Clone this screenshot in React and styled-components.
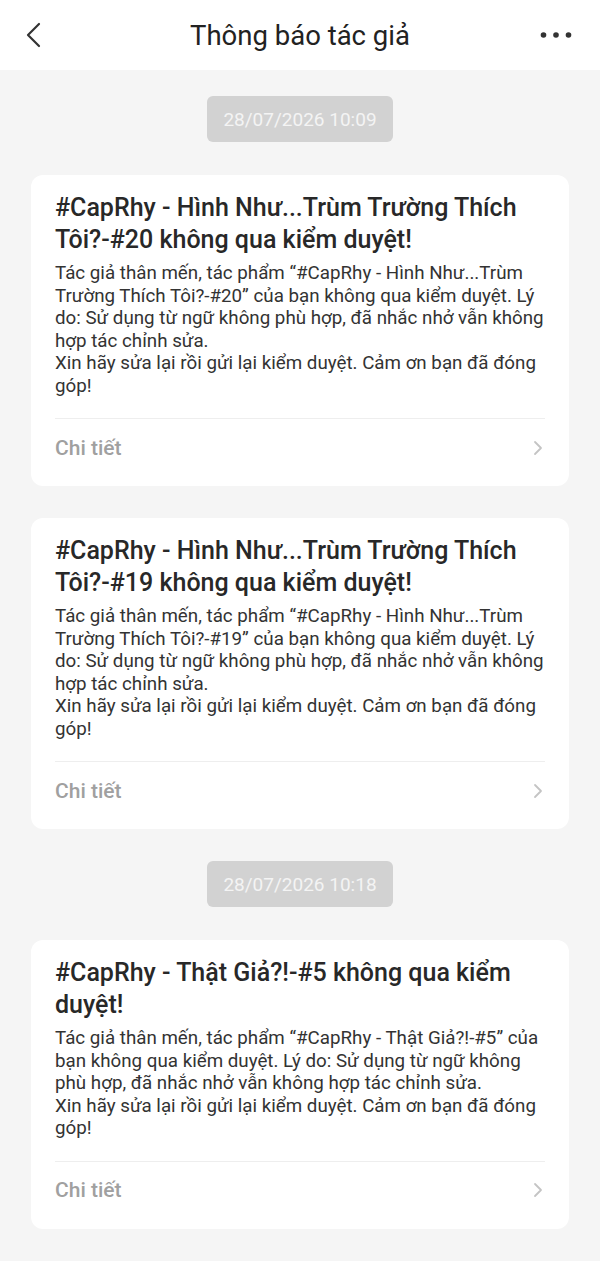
import React from "react";
import styled, { createGlobalStyle } from "styled-components";

const Global = createGlobalStyle`
  html, body { margin: 0; padding: 0; background: #f5f5f5; }
  body { font-family: Roboto, "Noto Sans", sans-serif; -webkit-font-smoothing: antialiased; }
  * { box-sizing: border-box; }
`;

const Page = styled.div`
  width: 600px;
  min-height: 1261px;
  background: #f5f5f5;
`;

const Header = styled.header`
  height: 70px;
  background: #fff;
  display: grid;
  grid-template-columns: 100px 1fr 100px;
  align-items: center;
`;

const IconBtn = styled.div`
  display: flex;
  align-items: center;
  justify-content: ${(p) => p.$align || "center"};
  height: 100%;
  padding: 0 ${(p) => p.$pad || 0}px;
`;

const Title = styled.h1`
  margin: 0;
  text-align: center;
  font-size: 27.5px;
  font-weight: 400;
  color: #222;
  white-space: nowrap;
`;

const Feed = styled.main`
  display: flex;
  flex-direction: column;
  align-items: center;
  padding: 26px 31px 32px;
  gap: 32px;
`;

const DatePill = styled.div`
  width: 186px;
  height: 46px;
  margin-bottom: 1px;
  border-radius: 6px;
  background: #d2d2d2;
  color: #f4f4f4;
  font-size: 19px;
  display: flex;
  align-items: center;
  justify-content: center;
`;

const Card = styled.article`
  width: 538px;
  background: #fff;
  border-radius: 12px;
  padding: 17px 24px 10px;
`;

const CardTitle = styled.h2`
  margin: 0;
  font-size: 25px;
  line-height: 32px;
  font-weight: 500;
  color: #282828;
`;

const Body = styled.p`
  margin: 6px 0 0;
  font-size: 18.75px;
  line-height: 22.5px;
  color: #333;
`;

const Footer = styled.div`
  margin-top: 21px;
  border-top: 1px solid #eeeeee;
  height: 58px;
  display: flex;
  align-items: center;
  justify-content: space-between;
`;

const Detail = styled.span`
  font-size: 21px;
  font-weight: 500;
  color: #a0a0a0;
`;

const Chevron = () => (
  <svg width="10" height="16" viewBox="0 0 10 16" style={{ marginRight: 2 }}>
    <polyline points="2,2 8,8 2,14" fill="none" stroke="#c4c4c4" strokeWidth="1.8" strokeLinecap="round" strokeLinejoin="round" />
  </svg>
);

const Back = () => (
  <svg width="20" height="28" viewBox="0 0 20 28">
    <polyline points="15,3 4,14 15,25" fill="none" stroke="#333" strokeWidth="2.2" strokeLinecap="round" strokeLinejoin="round" />
  </svg>
);

const More = () => (
  <svg width="32" height="8" viewBox="0 0 32 8">
    <circle cx="3.5" cy="4" r="2.8" fill="#333" />
    <circle cx="16" cy="4" r="2.8" fill="#333" />
    <circle cx="28.5" cy="4" r="2.8" fill="#333" />
  </svg>
);

const BODY2 = "Xin hãy sửa lại rồi gửi lại kiểm duyệt. Cảm ơn bạn đã đóng góp!";

const items = [
  { date: "28/07/2026 10:09" },
  {
    title: "#CapRhy - Hình Như...Trùm Trường Thích Tôi?-#20 không qua kiểm duyệt!",
    body: "Tác giả thân mến, tác phẩm “#CapRhy - Hình Như...Trùm Trường Thích Tôi?-#20” của bạn không qua kiểm duyệt. Lý do: Sử dụng từ ngữ không phù hợp, đã nhắc nhở vẫn không hợp tác chỉnh sửa.",
  },
  {
    title: "#CapRhy - Hình Như...Trùm Trường Thích Tôi?-#19 không qua kiểm duyệt!",
    body: "Tác giả thân mến, tác phẩm “#CapRhy - Hình Như...Trùm Trường Thích Tôi?-#19” của bạn không qua kiểm duyệt. Lý do: Sử dụng từ ngữ không phù hợp, đã nhắc nhở vẫn không hợp tác chỉnh sửa.",
  },
  { date: "28/07/2026 10:18" },
  {
    title: "#CapRhy - Thật Giả?!-#5 không qua kiểm duyệt!",
    body: "Tác giả thân mến, tác phẩm “#CapRhy - Thật Giả?!-#5” của bạn không qua kiểm duyệt. Lý do: Sử dụng từ ngữ không phù hợp, đã nhắc nhở vẫn không hợp tác chỉnh sửa.",
  },
];

export default function App() {
  return (
    <Page>
      <Global />
      <Header>
        <IconBtn $align="flex-start" $pad={24}><Back /></IconBtn>
        <Title>Thông báo tác giả</Title>
        <IconBtn $align="flex-end" $pad={28}><More /></IconBtn>
      </Header>
      <Feed>
        {items.map((it, i) =>
          it.date ? (
            <DatePill key={i}>{it.date}</DatePill>
          ) : (
            <Card key={i}>
              <CardTitle>{it.title}</CardTitle>
              <Body>
                {it.body}
                <br />
                {BODY2}
              </Body>
              <Footer>
                <Detail>Chi tiết</Detail>
                <Chevron />
              </Footer>
            </Card>
          )
        )}
      </Feed>
    </Page>
  );
}
